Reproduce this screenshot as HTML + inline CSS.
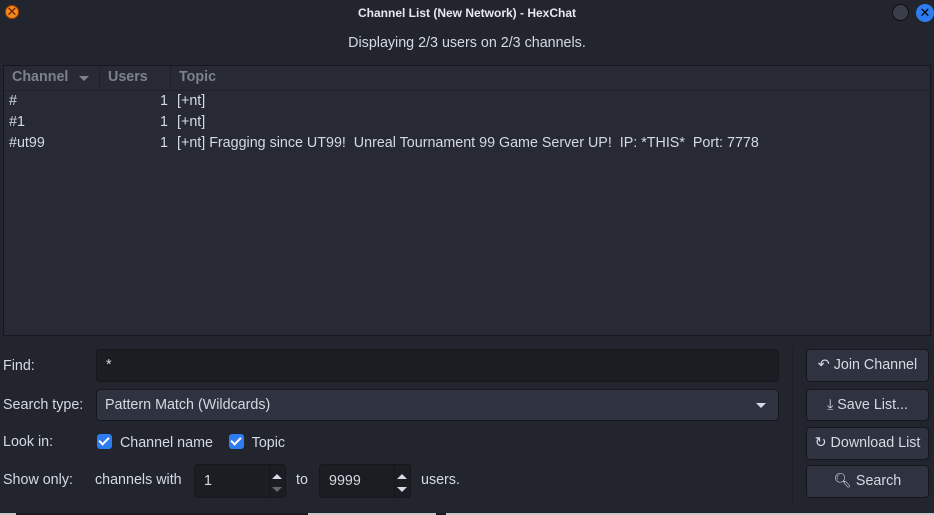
<!DOCTYPE html>
<html><head><meta charset="utf-8"><style>
*{box-sizing:border-box;margin:0;padding:0}
body{width:934px;height:515px;background:#22252e;font-family:"Liberation Sans","DejaVu Sans",sans-serif;color:#d3dae3;font-size:14.3px;position:relative;overflow:hidden}
.a{position:absolute;white-space:nowrap}
.list{position:absolute;left:3px;top:65px;width:928px;height:271px;background:#272a35;border:1px solid #15171c}
.hdr{position:absolute;left:0;top:0;right:0;height:25px;border-bottom:1px solid #1f2129;color:#7c818c;font-weight:bold}
.inp{position:absolute;background:#1b1d23;border:1px solid #15171c;border-radius:4px}
.combo{position:absolute;background:#2f3340;border:1px solid #15171c;border-radius:4px}
.btn{position:absolute;left:806px;width:123px;background:#2f3340;border:1px solid #15171c;border-radius:4px;text-align:center;color:#d3dae3;line-height:30px}
.cb{display:inline-block;width:15px;height:15px;background:#2d7cf0;border-radius:3px;vertical-align:-2px;position:relative}
.cb:after{content:"";position:absolute;left:4px;top:1px;width:4px;height:8px;border:solid #fff;border-width:0 2px 2px 0;transform:rotate(45deg)}
.spin{position:absolute;right:0;top:0;width:16px;height:100%;border-left:1px solid #15171c}
.tri{position:absolute;width:0;height:0;border-left:5px solid transparent;border-right:5px solid transparent}
</style></head><body>
<div class="a" style="left:5px;top:5px;width:14px;height:14px;border-radius:50%;background:#f08a1c;border:1px solid #a04000;color:#6a1a00;font-size:13px;line-height:12px;text-align:center;font-weight:bold">✕</div>
<div class="a" style="left:0;width:934px;top:6px;text-align:center;font-size:12px;font-weight:bold;color:#e6e9ee">Channel List (New Network) - HexChat</div>
<div class="a" style="left:892px;top:4px;width:17px;height:17px;border-radius:50%;background:#3a3e4a;border:1px solid #111"></div>
<div class="a" style="left:916px;top:4px;width:18px;height:18px;border-radius:50%;background:#2d7cf0;color:#000;font-weight:bold;font-size:13px;line-height:18px;text-align:center">✕</div>
<div class="a" style="left:0;width:934px;top:35px;text-align:center">Displaying 2/3 users on 2/3 channels.</div>
<div class="list">
<div class="hdr">
<span class="a" style="left:8px;top:3px">Channel</span><div class="tri" style="left:75px;top:10px;border-top:5px solid #7c818c"></div>
<div class="a" style="left:95px;top:0;height:25px;border-left:1px solid #1f2129"></div>
<span class="a" style="left:104px;top:3px">Users</span>
<div class="a" style="left:166px;top:0;height:25px;border-left:1px solid #1f2129"></div>
<span class="a" style="left:175px;top:3px">Topic</span>
</div>
<span class="a" style="left:5px;top:27px">#</span><span class="a" style="left:156px;top:27px">1</span><span class="a" style="left:173px;top:27px">[+nt]</span>
<span class="a" style="left:5px;top:48px">#1</span><span class="a" style="left:156px;top:48px">1</span><span class="a" style="left:173px;top:48px">[+nt]</span>
<span class="a" style="left:5px;top:69px">#ut99</span><span class="a" style="left:156px;top:69px">1</span><span class="a" style="left:173px;top:69px">[+nt] Fragging since UT99!&nbsp; Unreal Tournament 99 Game Server UP!&nbsp; IP: *THIS*&nbsp; Port: 7778</span>
</div>
<span class="a" style="left:3px;top:358px">Find:</span>
<div class="inp" style="left:96px;top:349px;width:683px;height:33px"><span class="a" style="left:9px;top:7px">*</span></div>
<span class="a" style="left:3px;top:397px">Search type:</span>
<div class="combo" style="left:96px;top:389px;width:683px;height:32px"><span class="a" style="left:8px;top:7px">Pattern Match (Wildcards)</span><div class="tri" style="right:12px;top:13px;border-top:5px solid #d3dae3"></div></div>
<span class="a" style="left:3px;top:434px">Look in:</span>
<span class="a" style="left:97px;top:434px"><span class="cb"></span>&nbsp; Channel name</span>
<span class="a" style="left:229px;top:434px"><span class="cb"></span>&nbsp; Topic</span>
<span class="a" style="left:3px;top:472px">Show only:</span>
<span class="a" style="left:95px;top:472px">channels with</span>
<div class="inp" style="left:194px;top:464px;width:92px;height:34px"><span class="a" style="left:9px;top:8px">1</span><div class="spin"><div class="tri" style="left:2px;top:9px;border-bottom:5px solid #d3dae3"></div><div class="tri" style="left:2px;top:22px;border-top:5px solid #666"></div></div></div>
<span class="a" style="left:296px;top:472px">to</span>
<div class="inp" style="left:319px;top:464px;width:92px;height:34px"><span class="a" style="left:9px;top:8px">9999</span><div class="spin"><div class="tri" style="left:2px;top:9px;border-bottom:5px solid #d3dae3"></div><div class="tri" style="left:2px;top:22px;border-top:5px solid #d3dae3"></div></div></div>
<span class="a" style="left:421px;top:472px">users.</span>
<div class="a" style="left:792px;top:345px;height:160px;border-left:1px solid #1e2028"></div>
<div class="btn" style="top:349px;height:33px">↶ Join Channel</div>
<div class="btn" style="top:389px;height:32px">⤓ Save List...</div>
<div class="btn" style="top:427px;height:33px">↻ Download List</div>
<div class="btn" style="top:465px;height:33px">🔍︎ Search</div>
<div class="a" style="left:0;top:513px;width:934px;height:2px;background:#c8c8c8"></div>
<div class="a" style="left:16px;top:513px;width:292px;height:2px;background:#1a1c20"></div>
<div class="a" style="left:436px;top:513px;width:10px;height:2px;background:#1a1c20"></div>
</body></html>
